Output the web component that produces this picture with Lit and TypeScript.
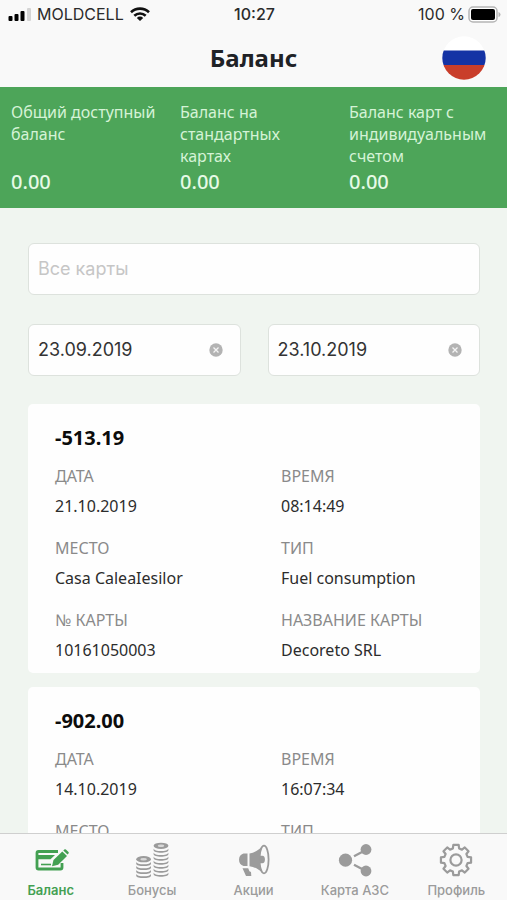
import { LitElement, html, svg, css } from "lit";
import { customElement, property } from "lit/decorators.js";
import { classMap } from "lit/directives/class-map.js";

interface Operation {
  amount: string;
  fields: [string, string][];
}

const balances = [
  { label: "Общий доступный баланс", value: "0.00" },
  { label: "Баланс на стандартных картах", value: "0.00" },
  { label: "Баланс карт с индивидуальным счетом", value: "0.00" },
];

const operations: Operation[] = [
  {
    amount: "-513.19",
    fields: [
      ["ДАТА", "21.10.2019"],
      ["ВРЕМЯ", "08:14:49"],
      ["МЕСТО", "Casa CaleaIesilor"],
      ["ТИП", "Fuel consumption"],
      ["№ КАРТЫ", "10161050003"],
      ["НАЗВАНИЕ КАРТЫ", "Decoreto SRL"],
    ],
  },
  {
    amount: "-902.00",
    fields: [
      ["ДАТА", "14.10.2019"],
      ["ВРЕМЯ", "16:07:34"],
      ["МЕСТО", ""],
      ["ТИП", ""],
    ],
  },
];

/* Outline of an eight-toothed gear centred on (18, 18). */
function gearPath(): string {
  const points: string[] = [];
  const at = (radius: number, degrees: number) => {
    const a = (degrees * Math.PI) / 180;
    return `${(18 + radius * Math.sin(a)).toFixed(2)} ${(18 - radius * Math.cos(a)).toFixed(2)}`;
  };
  for (let i = 0; i < 8; i++) {
    const c = i * 45;
    points.push(at(12, c - 15), at(15.3, c - 10), at(15.3, c + 10), at(12, c + 15));
  }
  return `M${points.join("L")}Z`;
}

/* A stack of discs whose top ellipse is centred on (cx, top). */
function coinStack(cx: number, top: number, discs: number) {
  const rows = Array.from({ length: discs }, (_, i) => top + 4 + i * 4);
  return svg`
    <ellipse cx=${cx} cy=${top} rx="7.4" ry="3.1" fill="currentColor"/>
    <ellipse cx=${cx} cy=${top} rx="3.2" ry="1.2" fill="#d8d8d8"/>
    ${rows.map(
      (y) => svg`<path d="M${cx - 7.4} ${y - 1.4}v1.6c0 3.6 14.8 3.6 14.8 0v-1.6c0 3.4-14.8 3.4-14.8 0z" fill="currentColor"/>`
    )}`;
}

const icons = {
  balance: svg`
    <path d="M25 9.500H5.500a1.500 1.500 0 0 0-1.500 1.500v14.500a1.500 1.500 0 0 0 1.500 1.500h22a1.500 1.500 0 0 0 1.500-1.500V21" fill="none" stroke="currentColor" stroke-width="2.800"/>
    <path d="M4 13h18l-4.500 4.300H4z" fill="currentColor"/>
    <path d="M8 22.500h10" stroke="currentColor" stroke-width="1.600"/>
    <path d="M19 24.300l1.500-6.300L29.300 9.600l4.700 4.500-8.800 8.700z" fill="currentColor" stroke="#f9f9f9" stroke-width="1" paint-order="stroke"/>
    <path d="M30.300 8.600l1-1q.8-.6 1.600 0l2.600 2.500q.7.800 0 1.500l-1 1z" fill="currentColor"/>`,
  bonuses: svg`${coinStack(9.6, 17.2, 4)}${coinStack(27, 3.8, 7)}`,
  offers: svg`
    <path d="M12.500 11.500H8.500a6.600 6.600 0 0 0 0 12.500h4z" fill="currentColor"/>
    <ellipse cx="29" cy="17.500" rx="4.600" ry="13.800" fill="#f9f9f9" stroke="currentColor" stroke-width="1.800"/>
    <path d="M14.500 11.500c5-.8 9.500-3.500 13.500-7.800-4 7-4 20.500 0 27.600-4-3.900-8.500-6.500-13.500-7.100z" fill="currentColor"/>
    <path d="M24.600 13.700h2.800a2.500 3.800 0 0 1 0 7.600h-2.800z" fill="currentColor"/>
    <path d="M7.500 26.200h5.700l1.200 3 1.600.7.300 4.100H11z" fill="currentColor"/>`,
  map: svg`
    <g fill="currentColor">
      <circle cx="8.500" cy="18.200" r="6.600"/>
      <circle cx="29" cy="7.500" r="5.400"/>
      <circle cx="29" cy="29" r="5.400"/>
    </g>
    <path d="M17 14.200l9-4.700M17 22.700l9 4.700" stroke="currentColor" stroke-width="2.300"/>`,
  profile: svg`
    <path d=${gearPath()} fill="none" stroke="currentColor" stroke-width="2.200" stroke-linejoin="round"/>
    <circle cx="18" cy="18" r="5.600" fill="none" stroke="currentColor" stroke-width="2.200"/>`,
};

type IconName = keyof typeof icons;

const tabs: { icon: IconName; label: string }[] = [
  { icon: "balance", label: "Баланс" },
  { icon: "bonuses", label: "Бонусы" },
  { icon: "offers", label: "Акции" },
  { icon: "map", label: "Карта АЗС" },
  { icon: "profile", label: "Профиль" },
];

@customElement("status-bar")
class StatusBar extends LitElement {
  static styles = css`
    :host {
      display: grid;
      grid-template-columns: 1fr auto 1fr;
      align-items: center;
      height: 28px;
      padding: 0 6px 0 8px;
      font: 16px/20px Inter, "Liberation Sans", sans-serif;
      color: #2b2b2b;
    }
    .side {
      display: flex;
      align-items: center;
      gap: 6px;
    }
    .right {
      justify-content: flex-end;
      gap: 3px;
    }
    .time {
      font-weight: 500;
    }
    svg {
      display: block;
    }
  `;

  render() {
    return html`
      <div class="side">
        <svg width="23" height="14" viewBox="0 0 23 14" aria-hidden="true">
          <rect x="0.500" y="9" width="4" height="5" rx="1"/>
          <rect x="6.500" y="7" width="4" height="7" rx="1"/>
          <rect x="12.500" y="4" width="4" height="10" rx="1"/>
          <rect x="19" y="1" width="4" height="13" rx="1" fill="#d4d4d4"/>
        </svg>
        <span>MOLDCELL</span>
        <svg width="20" height="14" viewBox="0 0 20 14" fill="none" stroke="#111" stroke-width="2.600" aria-hidden="true">
          <path d="M1 5.200a13 13 0 0 1 18 0M4.300 8.800a8.300 8.300 0 0 1 11.400 0"/>
          <path d="M10 14L6.800 10.900a4.600 4.600 0 0 1 6.400 0z" fill="#111" stroke="none"/>
        </svg>
      </div>
      <span class="time">10:27</span>
      <div class="side right">
        <span>100 %</span>
        <svg width="33" height="17" viewBox="0 0 33 17" aria-hidden="true">
          <rect x="1" y="1" width="28" height="15" rx="4" fill="#fff" stroke="#b5b5b5" stroke-width="1.500"/>
          <rect x="3" y="3" width="24" height="11" rx="2"/>
          <path d="M30.500 6q2 .5 2 2.500t-2 2.500z" fill="#b5b5b5"/>
        </svg>
      </div>
    `;
  }
}

@customElement("operation-card")
class OperationCard extends LitElement {
  @property({ attribute: false }) operation!: Operation;

  static styles = css`
    :host {
      display: block;
      padding: 20px 27px 11px;
      border-radius: 5px;
      background: #fefefe;
    }
    .amount {
      margin: 0 0 12px;
      font-size: 20px;
      line-height: 28px;
      font-weight: 700;
      color: #0c0c0c;
    }
    .fields {
      display: grid;
      grid-template-columns: 1fr 1fr;
      gap: 18px 54px;
      margin: 0;
    }
    .field {
      display: flex;
      flex-direction: column;
      gap: 6px;
      white-space: nowrap;
      font-size: 16px;
      line-height: 24px;
    }
    .name {
      color: #8a8a8a;
    }
    .value {
      margin: 0;
      min-height: 24px;
      color: #2c2c2c;
    }
  `;

  render() {
    return html`
      <h2 class="amount">${this.operation.amount}</h2>
      <dl class="fields">
        ${this.operation.fields.map(
          ([name, value]) => html`
            <div class="field">
              <dt class="name">${name}</dt>
              <dd class="value">${value}</dd>
            </div>
          `
        )}
      </dl>
    `;
  }
}

@customElement("tab-bar")
class TabBar extends LitElement {
  @property() active: IconName = "balance";

  static styles = css`
    .tabs {
      display: grid;
      grid-template-columns: repeat(5, 1fr);
      height: 66px;
      border-top: 1px solid #cfcfcf;
      background: #f9f9f9;
    }
    .tab {
      display: flex;
      flex-direction: column;
      align-items: center;
      gap: 4px;
      padding: 8px 0 0;
      border: 0;
      background: none;
      color: #9b9b9b;
      font: 500 13px/16px Inter, "Liberation Sans", sans-serif;
      white-space: nowrap;
      cursor: pointer;
    }
    .active {
      color: #43a052;
      font-weight: 600;
    }
    svg {
      display: block;
      overflow: visible;
    }
  `;

  render() {
    return html`
      <nav class="tabs">
        ${tabs.map(
          (tab) => html`
            <button
              type="button"
              class=${classMap({ tab: true, active: tab.icon === this.active })}
              @click=${() => (this.active = tab.icon)}
            >
              <svg width="36" height="36" viewBox="0 0 36 36" aria-hidden="true">${icons[tab.icon]}</svg>
              ${tab.label}
            </button>
          `
        )}
      </nav>
    `;
  }
}

@customElement("app-root")
class AppRoot extends LitElement {
  static styles = css`
    :host {
      display: flex;
      flex-direction: column;
      height: 100vh;
      background: #f0f5f0;
      font-family: "Noto Sans", "Open Sans", sans-serif;
    }
    .top {
      background: #f9f9f9;
    }
    .titlebar {
      display: grid;
      grid-template-columns: 1fr auto 1fr;
      align-items: center;
      height: 59px;
      padding: 0 21px;
    }
    .title {
      grid-column: 2;
      margin: 0;
      font-size: 24px;
      line-height: 32px;
      font-weight: 700;
      color: #202226;
    }
    .language {
      justify-self: end;
      padding: 0;
      border: 0;
      background: none;
      cursor: pointer;
    }
    .flag {
      display: block;
    }
    .balances {
      display: grid;
      grid-template-columns: repeat(3, minmax(0, 1fr));
      padding: 14px 0 12px;
      background: #4da559;
    }
    .balance {
      display: flex;
      flex-direction: column;
      justify-content: space-between;
      gap: 1px;
      padding: 0 11px;
    }
    .balance-label {
      font-size: 16px;
      line-height: 22px;
      color: #d5f3d6;
    }
    .balance-value {
      font-size: 20px;
      line-height: 28px;
      font-weight: 500;
      color: #e6fae6;
    }
    .content {
      flex: 1;
      min-height: 0;
      overflow: hidden auto;
      scrollbar-width: none;
      padding: 35px 27px 0 28px;
    }
    .filters {
      display: grid;
      grid-template-columns: repeat(2, minmax(0, 1fr));
      gap: 29px 27px;
      margin-bottom: 28px;
    }
    .field {
      display: flex;
      align-items: center;
      box-sizing: border-box;
      height: 52px;
      padding: 0 17px 0 9px;
      border: 1px solid #dde2dd;
      border-radius: 6px;
      background: #fefefe;
    }
    .wide {
      grid-column: 1 / -1;
    }
    .input {
      flex: 1;
      min-width: 0;
      padding: 0;
      border: 0;
      outline: 0;
      background: none;
      font: 18px/24px Inter, "Liberation Sans", sans-serif;
      color: #333;
    }
    .input::placeholder {
      color: #c6c6c6;
    }
    .clear {
      padding: 0;
      border: 0;
      background: none;
      cursor: pointer;
    }
    .clear svg {
      display: block;
    }
    .cards {
      display: flex;
      flex-direction: column;
      gap: 14px;
    }
  `;

  private dateField(label: string, value: string) {
    return html`
      <div class="field">
        <input class="input" type="text" aria-label=${label} .value=${value} />
        <button class="clear" type="button" aria-label="Очистить">
          <svg width="14" height="14" viewBox="0 0 14 14">
            <circle cx="7" cy="7" r="6.700" fill="#b3b3b3"/>
            <path d="M4.500 4.500l5 5M9.500 4.500l-5 5" stroke="#f4f4f4" stroke-width="1.300"/>
          </svg>
        </button>
      </div>
    `;
  }

  render() {
    return html`
      <header class="top">
        <status-bar></status-bar>
        <div class="titlebar">
          <h1 class="title">Баланс</h1>
          <button class="language" type="button" aria-label="Русский">
            <svg class="flag" width="44" height="44" viewBox="0 0 44 44">
              <clipPath id="disc"><circle cx="22" cy="22" r="21.700"/></clipPath>
              <g clip-path="url(#disc)">
                <path d="M0 0h44v15H0z" fill="#fff"/>
                <path d="M0 14.500h44V29H0z" fill="#1433a5"/>
                <path d="M0 29h44v15H0z" fill="#c93e2b"/>
              </g>
            </svg>
          </button>
        </div>
      </header>
      <section class="balances">
        ${balances.map(
          (b) => html`
            <div class="balance">
              <span class="balance-label">${b.label}</span>
              <span class="balance-value">${b.value}</span>
            </div>
          `
        )}
      </section>
      <main class="content">
        <div class="filters">
          <div class="field wide">
            <input class="input" type="text" aria-label="Карта" placeholder="Все карты" />
          </div>
          ${this.dateField("Дата начала", "23.09.2019")}
          ${this.dateField("Дата окончания", "23.10.2019")}
        </div>
        <div class="cards">
          ${operations.map((o) => html`<operation-card .operation=${o}></operation-card>`)}
        </div>
      </main>
      <tab-bar></tab-bar>
    `;
  }
}
